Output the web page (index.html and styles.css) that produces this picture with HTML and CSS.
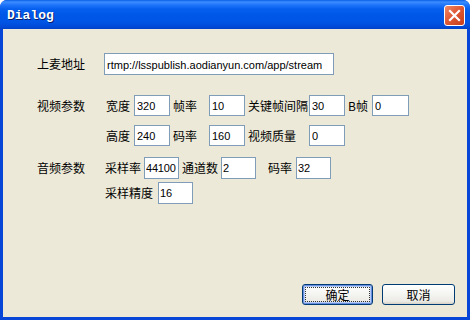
FILE: index.html
```html
<!DOCTYPE html>
<html lang="zh-CN">
<head>
    <meta charset="UTF-8">
    <title>Dialog</title>
    <link rel="stylesheet" href="styles.css">
</head>
<body>
    <div class="window">
        <div class="titlebar">
            <span class="title">Dialog</span>
            <button class="close" aria-label="close">
                <svg width="13" height="13" viewBox="0 0 13 13"><path d="M2 2 L11 11 M11 2 L2 11" stroke="#fff" stroke-width="2.2" stroke-linecap="square"/></svg>
            </button>
        </div>

        <div class="client">
            <div class="row url-row">
                <span class="group">上麦地址</span>
                <input class="field url" value="rtmp://lsspublish.aodianyun.com/app/stream">
            </div>

            <div class="row video-row">
                <span class="group">视频参数</span>
                <div class="video-grid">
                    <span class="cap first">宽度</span><input class="field" value="320">
                    <span class="cap">帧率</span><input class="field" value="10">
                    <span class="cap">关键帧间隔</span><input class="field" value="30">
                    <span class="cap">B帧</span><input class="field" value="0">

                    <span class="cap first">高度</span><input class="field" value="240">
                    <span class="cap">码率</span><input class="field" value="160">
                    <span class="cap">视频质量</span><input class="field" value="0">
                </div>
            </div>

            <div class="row audio-row">
                <span class="group">音频参数</span>
                <div class="audio">
                    <div class="audio-line">
                        <span class="cap first a-rate">采样率</span><input class="field narrow" value="44100">
                        <span class="cap a-chan">通道数</span><input class="field narrow" value="2">
                        <span class="cap a-bit">码率</span><input class="field narrow" value="32">
                    </div>
                    <div class="audio-line">
                        <span class="cap first a-depth">采样精度</span><input class="field narrow" value="16">
                    </div>
                </div>
            </div>

            <div class="buttons">
                <button class="btn default">确定</button>
                <button class="btn">取消</button>
            </div>
        </div>
    </div>
</body>
</html>
```

FILE: styles.css
```css
body {
    margin: 0;
    width: 470px;
    height: 320px;
    background: #fff;
    font-family: "Noto Sans CJK SC", "Liberation Sans", sans-serif;
    font-size: 12px;
    color: #000;
}
.window {
    width: 470px;
    height: 320px;
    display: flex;
    flex-direction: column;
    background: #0846d8;
    border-radius: 7px 7px 0 0;
    overflow: hidden;
}
.titlebar {
    height: 29px;
    flex: none;
    display: flex;
    align-items: center;
    justify-content: space-between;
    padding: 0 5px 0 7px;
    background: linear-gradient(to bottom, #0a5fe6 0px, #3c8dff 2px, #1e74fa 5px, #0660ee 9px, #0058e8 14px, #0055e5 22px, #0049d6 27px, #0041c8 29px);
}
.title {
    font-family: "Liberation Mono", "DejaVu Sans Mono", monospace;
    font-weight: bold;
    font-size: 13px;
    color: #fff;
    text-shadow: 1px 1px 0 #0a1e6c;
    margin-top: 1px;
}
.close {
    width: 21px;
    height: 21px;
    padding: 0;
    margin-top: 2px;
    border: 1px solid #fff;
    border-radius: 3px;
    background: linear-gradient(to bottom right, #ee8a66, #e05a36 45%, #c63e1a);
    display: flex;
    align-items: center;
    justify-content: center;
}
.client {
    flex: 1;
    margin: 0 3px 3px 3px;
    background: #ece9d8;
    display: flex;
    flex-direction: column;
    padding: 24px 12px 12px 34px;
}
.row {
    display: flex;
    align-items: flex-start;
}
.group {
    width: 68px;
    flex: none;
    line-height: 21px;
}
.url-row .group {
    width: 67px;
    line-height: 22px;
}
.field {
    box-sizing: border-box;
    height: 21px;
    margin: 0;
    border: 1px solid #7f9db9;
    background: #fff;
    padding: 1px 2px 0;
    font-family: "Liberation Sans", "DejaVu Sans", sans-serif;
    font-size: 11px;
    color: #000;
    outline: none;
}
.url {
    width: 230px;
    height: 22px;
}
.video-row {
    margin-top: 20px;
}
.video-grid {
    display: grid;
    grid-template-columns: 29px 36px 39px 36px 64px 36px 27px 37px;
    grid-auto-rows: 21px;
    row-gap: 9px;
}
.video-grid .field {
    width: 100%;
}
.cap {
    line-height: 21px;
    padding-left: 3px;
    white-space: nowrap;
}
.cap.first {
    padding-left: 1px;
}
.audio-row {
    margin-top: 11px;
}
.audio-row .group {
    line-height: 22px;
}
.audio {
    display: flex;
    flex-direction: column;
    gap: 3px;
}
.audio-line {
    display: flex;
}
.audio-line .cap {
    line-height: 22px;
    padding-left: 0;
}
.narrow {
    width: 35px;
    height: 22px;
    padding: 0 1px;
    letter-spacing: -0.2px;
}
.a-rate { width: 39px; }
.a-chan { width: 39px; padding-left: 3px !important; }
.a-bit { width: 28px; padding-left: 12px !important; }
.a-depth { width: 53px; }
.buttons {
    margin-top: auto;
    display: flex;
    justify-content: flex-end;
    gap: 9px;
}
.btn {
    width: 73px;
    height: 21px;
    padding: 0;
    border: 1px solid #003c74;
    border-radius: 3px;
    background: linear-gradient(to bottom, #ffffff, #f4f4f0 50%, #ecebe6 85%, #d6d0c5);
    font-family: "Noto Sans CJK SC", sans-serif;
    font-size: 12px;
    color: #000;
}
.btn.default {
    width: 71px;
    box-shadow: inset 0 0 0 1px #6b8fe0, inset 0 0 0 2px #b4ccf6;
    outline: 1px dotted #333;
    outline-offset: -4px;
}
```
